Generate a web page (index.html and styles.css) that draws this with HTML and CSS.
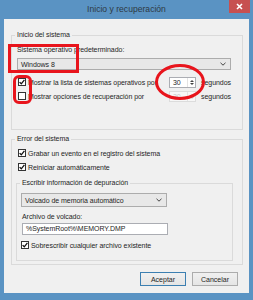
FILE: index.html
```html
<!DOCTYPE html>
<html lang="es">
<head>
    <meta charset="UTF-8">
    <title>Inicio y recuperación</title>
    <link rel="stylesheet" href="styles.css">
</head>
<body>
    <div class="window">
        <div class="titlebar">
            <span class="title">Inicio y recuperación</span>
            <span class="close">
                <svg width="7" height="7" viewBox="0 0 7 7"><path d="M1 1L6 6M6 1L1 6" stroke="#fff" stroke-width="1.6"/></svg>
            </span>
        </div>

        <div class="client">
            <fieldset class="group startup">
                <legend>Inicio del sistema</legend>
                <div class="label">Sistema operativo predeterminado:</div>
                <div class="select os">
                    <span>Windows 8</span>
                    <svg class="chev" width="6" height="4" viewBox="0 0 6 4"><path d="M0.5 0.8L3 3.2L5.5 0.8" fill="none" stroke="#444" stroke-width="1"/></svg>
                </div>
                <div class="timed first">
                    <div class="row">
                        <span class="chk"><svg width="6" height="6" viewBox="0 0 6 6"><path d="M0.6 3.1L2.3 4.8L5.4 0.9" fill="none" stroke="#111" stroke-width="1.3"/></svg></span>
                        <span>Mostrar la lista de sistemas operativos por</span>
                    </div>
                    <div class="spin">
                        <span class="num">30</span>
                        <span class="arrows"><i class="up"></i><i class="down"></i></span>
                    </div>
                    <span>segundos</span>
                </div>
                <div class="timed">
                    <div class="row">
                        <span class="chk"></span>
                        <span>Mostrar opciones de recuperación por</span>
                    </div>
                    <div class="spin off">
                        <span class="num">30</span>
                        <span class="arrows"><i class="up"></i><i class="down"></i></span>
                    </div>
                    <span>segundos</span>
                </div>
            </fieldset>

            <fieldset class="group failure">
                <legend>Error del sistema</legend>
                <div class="row first">
                    <span class="chk"><svg width="6" height="6" viewBox="0 0 6 6"><path d="M0.6 3.1L2.3 4.8L5.4 0.9" fill="none" stroke="#111" stroke-width="1.3"/></svg></span>
                    <span>Grabar un evento en el registro del sistema</span>
                </div>
                <div class="row">
                    <span class="chk"><svg width="6" height="6" viewBox="0 0 6 6"><path d="M0.6 3.1L2.3 4.8L5.4 0.9" fill="none" stroke="#111" stroke-width="1.3"/></svg></span>
                    <span>Reiniciar automáticamente</span>
                </div>

                <fieldset class="group debug">
                    <legend>Escribir información de depuración</legend>
                    <div class="select dump">
                        <span>Volcado de memoria automático</span>
                        <svg class="chev" width="6" height="4" viewBox="0 0 6 4"><path d="M0.5 0.8L3 3.2L5.5 0.8" fill="none" stroke="#444" stroke-width="1"/></svg>
                    </div>
                    <div class="label">Archivo de volcado:</div>
                    <div class="field">%SystemRoot%\MEMORY.DMP</div>
                    <div class="row">
                        <span class="chk"><svg width="6" height="6" viewBox="0 0 6 6"><path d="M0.6 3.1L2.3 4.8L5.4 0.9" fill="none" stroke="#111" stroke-width="1.3"/></svg></span>
                        <span>Sobrescribir cualquier archivo existente</span>
                    </div>
                </fieldset>
            </fieldset>

            <div class="buttons">
                <button class="default">Aceptar</button>
                <button>Cancelar</button>
            </div>
        </div>

        <!-- red marks drawn over the screenshot -->
        <div class="mark box"></div>
        <div class="mark pill"></div>
        <div class="mark ring"></div>
    </div>
</body>
</html>
```

FILE: styles.css
```css
* {
    box-sizing: border-box;
}
body {
    margin: 0;
    background: #5a93c3;
    font-family: "Liberation Sans", Arial, sans-serif;
    font-size: 7px;
    letter-spacing: -0.05px;
    color: #1e1e1e;
}
.window {
    position: relative;
    width: 253px;
    height: 300px;
    display: flex;
    flex-direction: column;
}
.titlebar {
    height: 19px;
    display: grid;
    grid-template-columns: 1fr auto 1fr;
    align-items: start;
}
.title {
    grid-column: 2;
    font-size: 8.6px;
    letter-spacing: 0;
    line-height: 18px;
    color: #2e3a44;
}
.close {
    grid-column: 3;
    justify-self: end;
    width: 21px;
    height: 13px;
    margin-right: 3px;
    background: #c75050;
    display: flex;
    align-items: center;
    justify-content: center;
}
.client {
    margin: 0 4px;
    height: 274px;
    background: #f0f0f0;
    padding: 11px 6px 0 7px;
}
.group {
    margin: 0;
    padding: 0 9px 0 4px;
    border: 1px solid #dadada;
    min-width: 0;
}
legend {
    padding: 0 2px;
    margin-left: -1px;
    line-height: 10px;
}
.startup {
    padding-bottom: 26px;
}
.label {
    margin-left: 1px;
    line-height: 10px;
}
.startup .label {
    margin-top: 5px;
}
.select {
    display: flex;
    align-items: center;
    justify-content: space-between;
    border: 1px solid #acacac;
    background: #e8e8e8;
    padding: 0 4px 0 3px;
}
.select.os {
    margin: 3px 2px 0 1px;
    height: 12px;
}
.row {
    display: flex;
    align-items: center;
    height: 14px;
}
.chk {
    width: 8px;
    height: 8px;
    border: 1px solid #333;
    background: #fff;
    margin: 0 2px 0 2px;
    display: flex;
    align-items: center;
    justify-content: center;
    flex: none;
}
.timed {
    display: grid;
    grid-template-columns: 148px 27px auto;
    column-gap: 5px;
    align-items: center;
    height: 14px;
}
.timed.first {
    margin-top: 5px;
}
.spin {
    height: 11px;
    display: flex;
    border: 1px solid #abadb3;
    background: #fff;
}
.spin .num {
    flex: 1;
    padding-left: 3px;
    line-height: 9px;
}
.arrows {
    width: 8px;
    display: flex;
    flex-direction: column;
    align-items: center;
    justify-content: center;
    gap: 1px;
    border-left: 1px solid #e3e3e3;
}
.arrows i {
    width: 0;
    height: 0;
    border-left: 2px solid transparent;
    border-right: 2px solid transparent;
}
.arrows .up {
    border-bottom: 2px solid #444;
}
.arrows .down {
    border-top: 2px solid #444;
}
.spin.off {
    border-color: #dcdcdc;
    background: #f7f7f7;
    color: #c8c8c8;
}
.spin.off .arrows i {
    border-bottom-color: #c8c8c8;
    border-top-color: #c8c8c8;
}
.failure {
    margin-top: 4px;
    padding-bottom: 3px;
}
.failure > .row.first {
    margin-top: 2px;
}
.debug {
    margin-top: 4px;
    padding: 0 0 8px 4px;
}
.select.dump {
    width: 146px;
    height: 14px;
    margin-top: 5px;
}
.debug .label {
    margin-top: 5px;
}
.field {
    width: 146px;
    height: 12px;
    margin-top: 1px;
    margin-left: 1px;
    border: 1px solid #abadb3;
    background: #fff;
    padding-left: 3px;
    line-height: 10px;
}
.debug .row {
    margin-top: 3px;
}
.debug .chk {
    margin-left: 0;
}
.buttons {
    display: flex;
    justify-content: flex-end;
    gap: 6px;
    margin-top: 7px;
    padding-right: 5px;
}
button {
    width: 46px;
    height: 14px;
    padding: 0;
    font-family: inherit;
    font-size: 7px;
    color: #1e1e1e;
    border: 1px solid #acacac;
    background: linear-gradient(#f0f0f0, #e5e5e5);
}
button.default {
    border-color: #3c7fb1;
}
.mark {
    position: absolute;
    border: 3px solid #e8141c;
}
.mark.box {
    left: 8px;
    top: 44px;
    width: 71px;
    height: 29px;
}
.mark.pill {
    left: 13px;
    top: 75px;
    width: 19px;
    height: 29px;
    border-radius: 6px;
}
.mark.ring {
    left: 155px;
    top: 64px;
    width: 50px;
    height: 36px;
    border-radius: 50%;
}
```
